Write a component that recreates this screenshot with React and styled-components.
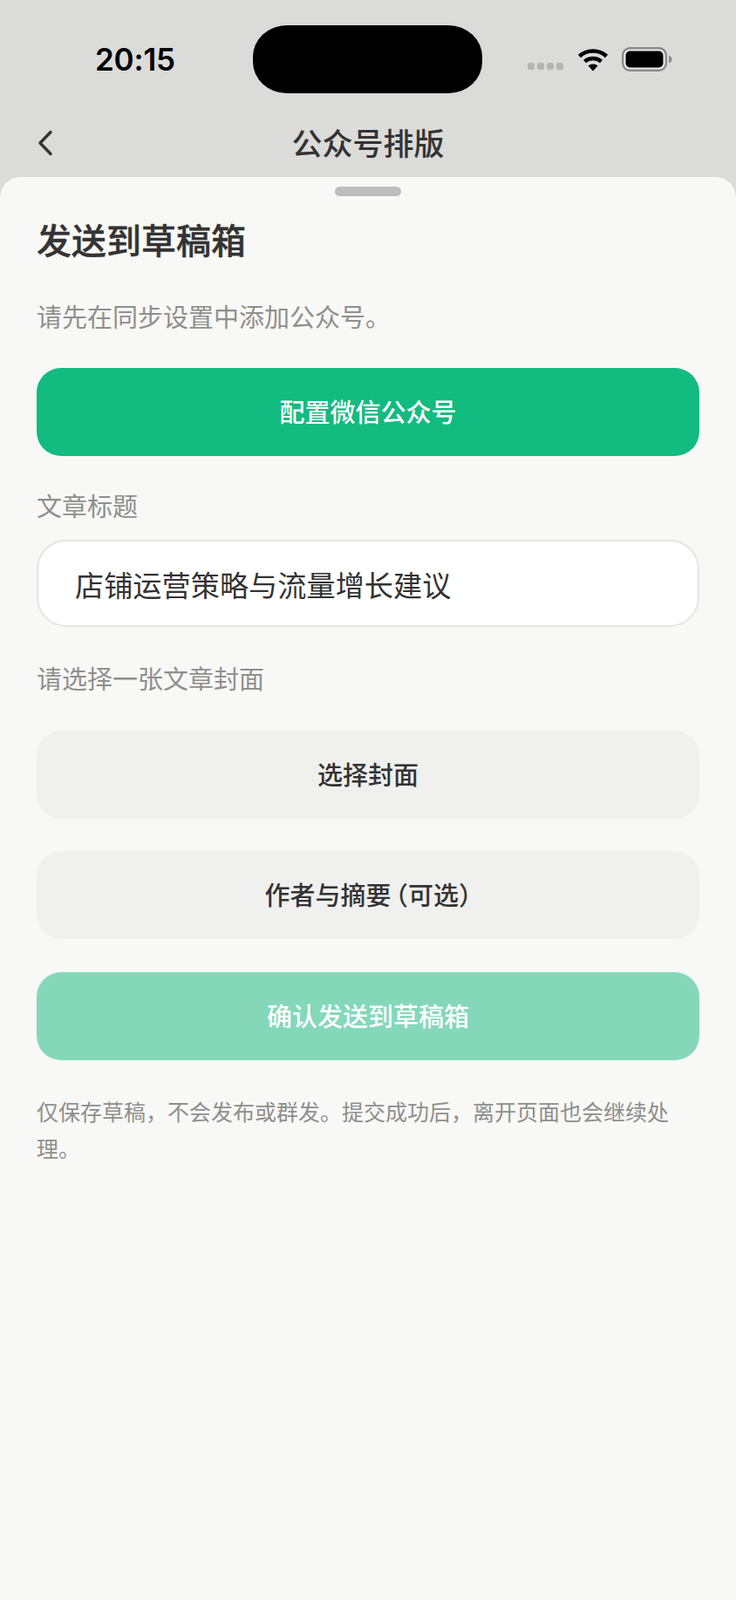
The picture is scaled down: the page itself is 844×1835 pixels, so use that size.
import React from 'react';
import styled, { createGlobalStyle } from 'styled-components';

const CJK = `"Noto Sans CJK SC", "Noto Sans", sans-serif`;

const GlobalStyle = createGlobalStyle`
  html, body {
    margin: 0;
    padding: 0;
    background: #dbdbd9;
  }
  * {
    box-sizing: border-box;
  }
`;

const StatusIcons = () => (
  <Signals>
    <Dots>
      <Dot />
      <Dot />
      <Dot />
      <Dot />
    </Dots>
    <svg width="36" height="28" viewBox="0 0 36 28" style={{ marginLeft: 16 }}>
      <path d="M2.5 10.5C11 2.5 25 2.5 33.5 10.5" fill="none" stroke="#000" strokeWidth="4.6" />
      <path d="M8.5 16.5C13.8 11.8 22.2 11.8 27.5 16.5" fill="none" stroke="#000" strokeWidth="4.4" />
      <path d="M12.6 21.5C15.6 18.9 20.4 18.9 23.4 21.5L18 27.5Z" fill="#000" />
    </svg>
    <svg width="58" height="28" viewBox="0 0 58 28" style={{ marginLeft: 15 }}>
      <rect x="1.2" y="1.2" width="49.6" height="25.6" rx="8" fill="#eeeeee" stroke="#8b8b8b" strokeWidth="2.4" />
      <rect x="4.5" y="4.5" width="43" height="19" rx="5" fill="#000" />
      <path d="M54 9.5C56.5 10.5 57.5 12 57.5 14C57.5 16 56.5 17.5 54 18.5Z" fill="#8b8b8b" />
    </svg>
  </Signals>
);

export default function App() {
  return (
    <>
      <GlobalStyle />
      <Page>
        <StatusBar>
          <Time>20:15</Time>
          <Island />
          <StatusIcons />
        </StatusBar>
        <NavBar>
          <BackButton>
            <svg width="18" height="30" viewBox="0 0 18 30">
              <path
                d="M15 2.5L3 15L15 27.5"
                fill="none"
                stroke="#333"
                strokeWidth="3.4"
                strokeLinecap="round"
                strokeLinejoin="round"
              />
            </svg>
          </BackButton>
          <NavTitle>公众号排版</NavTitle>
        </NavBar>
        <Sheet>
          <Handle />
          <Heading>发送到草稿箱</Heading>
          <Hint>请先在同步设置中添加公众号。</Hint>
          <ActionButton $kind="primary" $top={40}>配置微信公众号</ActionButton>
          <FieldLabel $top={36}>文章标题</FieldLabel>
          <TitleInput defaultValue="店铺运营策略与流量增长建议" />
          <FieldLabel $top={38}>请选择一张文章封面</FieldLabel>
          <ActionButton $top={41}>选择封面</ActionButton>
          <ActionButton $top={37}>
            作者与摘要<Optional>（可选）</Optional>
          </ActionButton>
          <ActionButton $kind="disabled" $top={38}>确认发送到草稿箱</ActionButton>
          <Note>仅保存草稿，不会发布或群发。提交成功后，离开页面也会继续处理。</Note>
        </Sheet>
      </Page>
    </>
  );
}

const Page = styled.div`
  width: 844px;
  height: 1835px;
  display: flex;
  flex-direction: column;
  background: #dbdbd9;
  font-family: ${CJK};
  overflow: hidden;
`;
const StatusBar = styled.div`
  display: grid;
  grid-template-columns: 290px 263px 1fr;
  align-items: center;
  padding-top: 29px;
`;
const Time = styled.div`
  padding-left: 109px;
  font-family: Inter, sans-serif;
  font-size: 35px;
  font-weight: 600;
  line-height: 78px;
  letter-spacing: -0.2px;
  color: #000;
`;
const Island = styled.div`
  height: 78px;
  background: #000;
  border-radius: 39px / 36px;
`;
const Signals = styled.div`
  display: flex;
  align-items: center;
  padding-left: 52px;
`;
const Dots = styled.div`
  display: flex;
  gap: 3px;
  margin-top: 15px;
`;
const Dot = styled.span`
  width: 8px;
  height: 8px;
  border-radius: 2.5px;
  background: #b5b5b3;
`;
const NavBar = styled.div`
  position: relative;
  height: 96px;
  padding-top: 16px;
  display: flex;
  align-items: center;
  justify-content: center;
`;
const BackButton = styled.div`
  position: absolute;
  left: 43px;
  top: 42px;
  display: flex;
`;
const NavTitle = styled.div`
  font-size: 35px;
  font-weight: 500;
  line-height: 50px;
  color: #333;
`;
const Sheet = styled.div`
  flex: 1;
  padding: 11px 42px 0;
  background: #f8f8f6;
  border-radius: 24px 24px 0 0;
`;
const Handle = styled.div`
  width: 76px;
  height: 11px;
  margin: 0 auto;
  border-radius: 6px;
  background: #bdbdbf;
`;
const Heading = styled.h1`
  margin: 24px 0 0;
  font-size: 40px;
  font-weight: 500;
  line-height: 50px;
  color: #333;
  -webkit-text-stroke: 0.4px #333;
`;
const Hint = styled.p`
  margin: 43px 0 0;
  font-size: 29px;
  font-weight: 400;
  line-height: 40px;
  color: #8f8f8d;
`;
const FieldLabel = styled.div`
  margin-top: ${p => p.$top}px;
  font-size: 29px;
  line-height: 40px;
  color: #8f8f8d;
`;
const ActionButton = styled.div`
  display: flex;
  align-items: center;
  justify-content: center;
  height: 101px;
  margin-top: ${p => p.$top}px;
  padding-bottom: 4px;
  border-radius: 28px;
  font-size: 29px;
  font-weight: 500;
  background: ${p =>
    p.$kind === 'primary' ? '#12bb80' : p.$kind === 'disabled' ? '#84d8b9' : '#f0f0ee'};
  color: ${p => (p.$kind ? '#fff' : '#333')};
`;
const Optional = styled.span`
  margin-left: 5px;
  font-feature-settings: "halt";
`;
const TitleInput = styled.input`
  display: block;
  width: 100%;
  height: 100px;
  margin-top: 20px;
  padding: 1px 42px 0;
  border: 2px solid #e5e5e5;
  border-radius: 34px;
  outline: none;
  background: #fff;
  font-family: ${CJK};
  font-size: 33.2px;
  color: #333;
`;
const Note = styled.p`
  margin: 37px 0 0;
  font-size: 25px;
  line-height: 42px;
  color: #8f8f8d;
`;
